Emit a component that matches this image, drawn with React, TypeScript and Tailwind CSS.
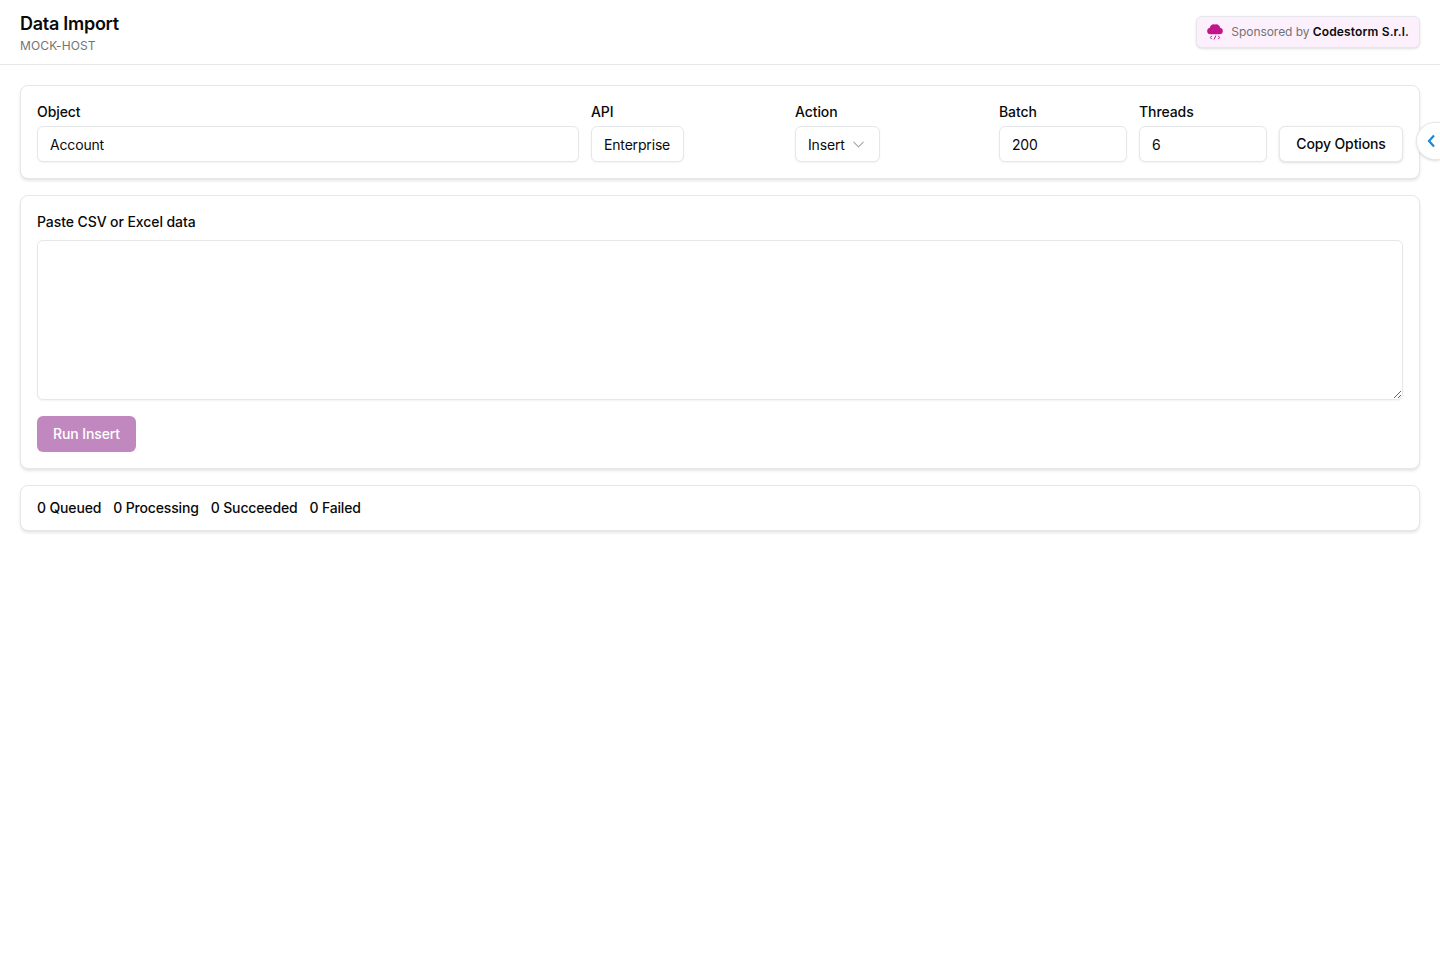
import { ChevronDown } from "lucide-react";

const fieldClass =
  "h-9 rounded-md border border-[#e5e7eb] bg-white px-3 text-sm tracking-[-0.012em] text-[#0a0a0a] shadow-xs outline-none";
const labelClass = "text-sm leading-5 font-medium tracking-[-0.006em]";
const cardClass = "rounded-lg border border-[#e5e7eb] bg-white shadow-[0_2px_3px_0_rgb(0_0_0/0.1)]";

function CloudCode() {
  return (
    <svg width="16" height="16" viewBox="0 0 16 16" fill="none" className="shrink-0">
      <path
        d="M3.3 10.2a3.2 3.2 0 0 1-.5-6.35A4.5 4.5 0 0 1 8 .4a4.6 4.6 0 0 1 5.2 3.45 3.2 3.2 0 0 1-.5 6.35Z"
        fill="#c0158c"
      />
      <path
        d="M4.8 11.8 3.4 13.5l1.4 1.7M11.2 11.8l1.4 1.7-1.4 1.7M8.9 11.5l-1.8 4"
        stroke="#c0158c"
        strokeWidth="1"
      />
    </svg>
  );
}

export default function App() {
  return (
    <div className="relative min-h-[960px] bg-white font-['Inter',sans-serif] text-[#0a0a0a]">
      {/* HEADER */}
      <div className="flex h-[65px] items-start justify-between border-b border-[#e5e7eb] px-5">
        <div className="pt-2.5">
          <h1 className="text-lg leading-7 font-semibold tracking-[-0.015em]">Data Import</h1>
          <p className="text-xs leading-4 tracking-[0.01em] text-[#737373]">MOCK-HOST</p>
        </div>
        <div className="mt-4 flex h-8 items-center gap-2 rounded-md border border-[#e5e7eb] bg-[#fdf0fd] px-2.5 text-xs shadow-sm">
          <CloudCode />
          <p className="tracking-[-0.004em] text-[#737373]">
            Sponsored by{" "}
            <span className="font-semibold tracking-[0.012em] text-[#0a0a0a]">Codestorm S.r.l.</span>
          </p>
        </div>
      </div>

      <div className="flex flex-col gap-4 p-5">
        {/* OPTIONS */}
        <div className={`${cardClass} p-4`}>
          <div className="flex items-end gap-3">
            <label className="flex min-w-0 flex-1 flex-col gap-1">
              <span className={labelClass}>Object</span>
              <input readOnly value="Account" className={`${fieldClass} w-full`} />
            </label>
            <div className="flex w-[192px] flex-col items-start gap-1">
              <span className={labelClass}>API</span>
              <button className={`${fieldClass} flex w-[93px] items-center pt-px`}>Enterprise</button>
            </div>
            <div className="flex w-[192px] flex-col items-start gap-1">
              <span className={labelClass}>Action</span>
              <button className={`${fieldClass} flex w-[85px] items-center gap-1 pt-px`}>
                Insert
                <ChevronDown size={19} strokeWidth={1.3} className="shrink-0 text-[#a3a3a3]" />
              </button>
            </div>
            <label className="flex w-32 flex-col gap-1">
              <span className={labelClass}>Batch</span>
              <input readOnly value="200" className={`${fieldClass} w-full`} />
            </label>
            <label className="flex w-32 flex-col gap-1">
              <span className={labelClass}>Threads</span>
              <input readOnly value="6" className={`${fieldClass} w-full`} />
            </label>
            <button className="h-9 w-[124px] rounded-md border border-[#e5e7eb] bg-white text-sm font-medium tracking-[-0.009em] shadow-sm">
              Copy Options
            </button>
          </div>
        </div>

        {/* PASTE AREA */}
        <div className={`${cardClass} p-4`}>
          <label className={`block ${labelClass}`}>Paste CSV or Excel data</label>
          <textarea className="mt-2 block h-40 w-full rounded-md border border-[#e5e7eb] bg-white px-3 py-2 text-sm shadow-xs outline-none" />
          <button className="mt-4 h-9 w-[99px] rounded-md bg-[#c188c0] text-sm font-medium tracking-[-0.007em] text-white">
            Run Insert
          </button>
        </div>

        {/* COUNTS */}
        <div className={`${cardClass} flex gap-3 px-4 py-3 text-sm leading-5 font-medium tracking-[-0.011em]`}>
          <span>0 Queued</span>
          <span>0 Processing</span>
          <span>0 Succeeded</span>
          <span>0 Failed</span>
        </div>
      </div>

      {/* SIDE TOGGLE */}
      <button className="absolute top-[122px] right-0 flex h-[38px] w-[24px] items-center justify-center rounded-l-full border border-r-0 border-[#e5e7eb] bg-white pl-[4px] shadow-sm">
        <svg width="10" height="14" viewBox="0 0 10 14" fill="none">
          <path d="M8 1.5 3 7l5 5.5" stroke="#1b87d6" strokeWidth="2.2" />
        </svg>
      </button>
    </div>
  );
}
